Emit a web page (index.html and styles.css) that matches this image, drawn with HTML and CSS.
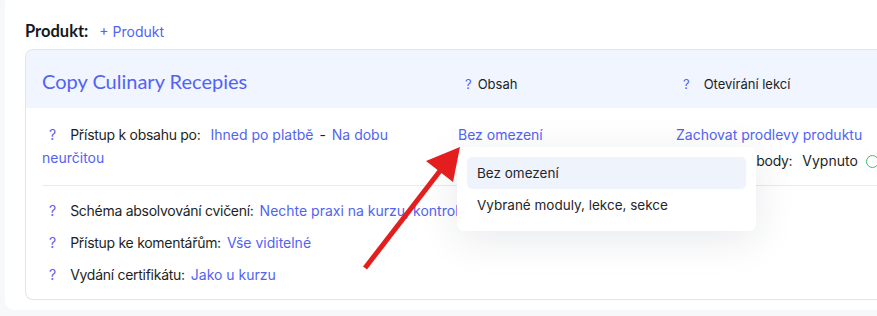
FILE: index.html
```html
<!DOCTYPE html>
<html lang="cs">
<head>
    <meta charset="UTF-8">
    <meta name="viewport" content="width=device-width, initial-scale=1.0">
    <title>Produkt</title>
    <link rel="stylesheet" href="styles.css">
</head>
<body>
    <div class="panel">
        <div class="product-line">
            <span class="product-label">Produkt:</span>
            <a class="link add-product">+ Produkt</a>
        </div>

        <div class="product-card">
            <div class="card-head">
                <div class="card-title">Copy Culinary Recepies</div>
                <div class="head-col"><span class="help help-tight">?</span>Obsah</div>
                <div class="head-col"><span class="help">?</span>Otevírání lekcí</div>
            </div>

            <div class="card-row">
                <div class="cell cell-wrap">
                    <span class="help">?</span><span class="label">Přístup k obsahu po:</span>
                    <a class="link">Ihned po platbě</a> <span class="dash">-</span> <a class="link">Na dobu neurčitou</a>
                </div>
                <div class="cell">
                    <a class="link">Bez omezení</a>
                </div>
                <div class="cell">
                    <div><a class="link">Zachovat prodlevy produktu</a></div>
                    <div class="sub-line"><span class="help">?</span><span class="label">Udělení body:</span> Vypnuto <span class="status-ring"></span></div>
                </div>
            </div>

            <div class="divider"></div>

            <div class="setting-list">
                <div class="setting"><span class="help">?</span><span class="label">Schéma absolvování cvičení:</span><a class="link">Nechte praxi na kurzu, kontrolovat</a></div>
                <div class="setting"><span class="help">?</span><span class="label">Přístup ke komentářům:</span><a class="link">Vše viditelné</a></div>
                <div class="setting"><span class="help">?</span><span class="label">Vydání certifikátu:</span><a class="link">Jako u kurzu</a></div>
            </div>
        </div>
    </div>

    <div class="dropdown">
        <div class="dropdown-item active">Bez omezení</div>
        <div class="dropdown-item">Vybrané moduly, lekce, sekce</div>
    </div>

    <svg class="pointer-arrow" width="130" height="140" viewBox="0 0 130 140">
        <line x1="8" y1="125" x2="86" y2="24" stroke="#e41e1e" stroke-width="5" stroke-linecap="butt"/>
        <polygon points="103,4 69,18 96,39" fill="#e41e1e"/>
    </svg>
</body>
</html>
```

FILE: styles.css
```css
body {
    margin: 0;
    background-color: #f7f8fa;
    font-family: Inter, "Noto Sans", sans-serif;
    font-size: 14px;
    color: #1d1f24;
    overflow: hidden;
    height: 316px;
}

.panel {
    margin-left: 5px;
    margin-top: -6px;
    width: 920px;
    height: 316px;
    background: white;
    border-radius: 10px;
    padding: 27px 0 0 20px;
    box-sizing: border-box;
}

.link {
    color: #5263f3;
    text-decoration: none;
    cursor: pointer;
}

.product-line {
    display: flex;
    align-items: baseline;
    gap: 11px;
    height: 28px;
}

.product-label {
    font-family: Lato, sans-serif;
    font-weight: 700;
    font-size: 16.5px;
    color: #16181d;
}

.add-product {
    font-size: 14px;
}

.product-card {
    border: 1px solid #e3e5eb;
    border-right: none;
    border-radius: 8px 0 0 8px;
    height: 251px;
    box-sizing: border-box;
    overflow: hidden;
}

.card-head,
.card-row {
    display: grid;
    grid-template-columns: 416px 218px 1fr;
    padding-left: 16px;
}

.card-head {
    height: 58px;
    align-items: center;
    background-color: #f0f5ff;
}

.card-title {
    font-family: Lato, sans-serif;
    font-size: 20px;
    color: #5263f3;
    margin-top: 4px;
}

.head-col {
    font-size: 13px;
    margin-top: 10px;
}

.help {
    display: inline-block;
    color: #5b60ef;
    margin: 0 14px 0 7px;
}

.help-tight {
    margin-right: 6px;
}

.label {
    margin-right: 6px;
    letter-spacing: -0.28px;
}

.card-row {
    padding-top: 15px;
    line-height: 23px;
    height: 62px;
}

.cell-wrap {
    padding-right: 14px;
}

.dash {
    margin: 0 2px;
}

.sub-line {
    margin-top: 3px;
    white-space: nowrap;
}

.status-ring {
    display: inline-block;
    width: 11px;
    height: 11px;
    border: 1.5px solid #34c26a;
    border-radius: 50%;
    vertical-align: -2px;
    margin-left: 4px;
}

.divider {
    margin-left: 16px;
    border-top: 1px solid #e8eaee;
}

.setting-list {
    padding: 9px 0 0 16px;
}

.setting {
    height: 32px;
    line-height: 32px;
    white-space: nowrap;
}

.dropdown {
    position: absolute;
    left: 457px;
    top: 147px;
    width: 299px;
    padding: 10px;
    box-sizing: border-box;
    background: white;
    border-radius: 7px;
    box-shadow: 0 8px 40px rgba(30, 40, 70, 0.10);
    font-size: 13.5px;
}

.dropdown-item {
    height: 32px;
    line-height: 32px;
    padding-left: 10px;
    border-radius: 5px;
    color: #24262c;
}

.dropdown-item.active {
    background-color: #eef3fc;
}

.pointer-arrow {
    position: absolute;
    left: 357px;
    top: 143px;
}
```
